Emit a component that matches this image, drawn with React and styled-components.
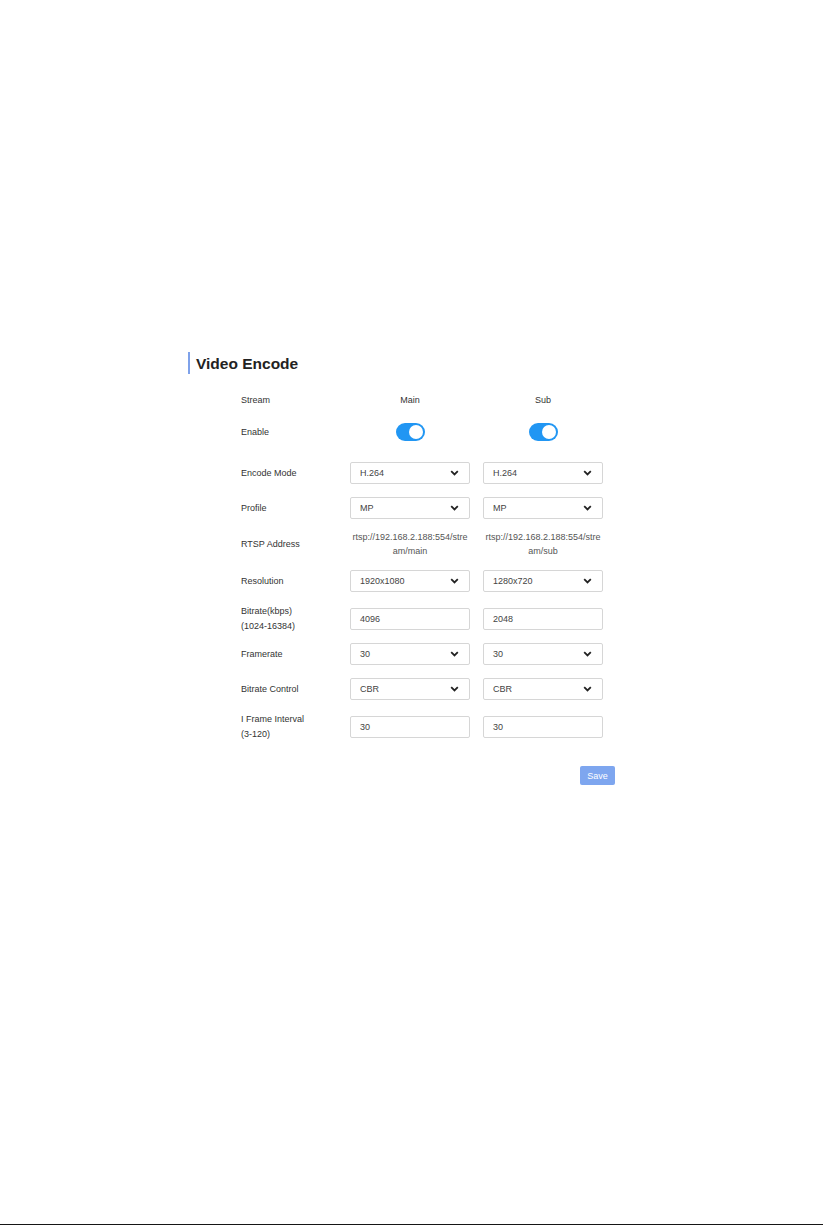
import React from 'react';
import styled, { createGlobalStyle } from 'styled-components';

/* Page wide defaults */
const GlobalStyle = createGlobalStyle`
  html, body {
    margin: 0;
    padding: 0;
    background: #fff;
  }
  body {
    font-family: "Liberation Sans", Arial, sans-serif;
    color: #333;
  }
`;

const Page = styled.div`
  min-height: 100vh;
  display: flex;
  flex-direction: column;
`;

const Section = styled.section`
  padding: 352px 0 0 188px;
`;

const Title = styled.h2`
  margin: 0;
  height: 22px;
  display: flex;
  align-items: center;
  padding: 2px 0 0 6px;
  box-sizing: border-box;
  border-left: 2px solid #7fa2ea;
  font-size: 15.5px;
  font-weight: bold;
  color: #222;
`;

const Form = styled.div`
  width: 374px;
  margin: 15px 0 0 53px;
  display: flex;
  flex-direction: column;
`;

const Row = styled.div`
  display: grid;
  grid-template-columns: 96px 120px 120px;
  column-gap: 13px;
  align-items: center;
  min-height: ${p => p.$h || 22}px;
  margin-top: ${p => p.$top || 0}px;
`;

const Label = styled.div`
  font-size: 9px;
  line-height: 15px;
  color: #333;
`;

const Head = styled.div`
  font-size: 9px;
  color: #333;
  text-align: center;
`;

const Address = styled.div`
  font-size: 9px;
  line-height: 14px;
  color: #555;
  text-align: center;
  word-break: break-all;
  padding: 0 1px;
`;

const SwitchCell = styled.div`
  display: flex;
  justify-content: center;
`;

const Switch = styled.div`
  width: 29px;
  height: 18px;
  border-radius: 9px;
  background: #2196f3;
  display: flex;
  align-items: center;
  justify-content: flex-end;
  padding: 0 2px;
  box-sizing: border-box;
`;

const Knob = styled.span`
  width: 14px;
  height: 14px;
  border-radius: 50%;
  background: #fff;
`;

const Box = styled.div`
  height: 22px;
  box-sizing: border-box;
  border: 1px solid #d6d6d6;
  border-radius: 2px;
  display: flex;
  align-items: center;
  justify-content: space-between;
  padding: 0 10px 0 9px;
  font-size: 9px;
  color: #444;
  background: #fff;
`;

const Actions = styled.div`
  display: flex;
  justify-content: flex-end;
  margin-top: 24px;
  width: 374px;
`;

const Button = styled.button`
  width: 35px;
  height: 19px;
  border: none;
  border-radius: 2px;
  background: #7ea6ef;
  color: #fff;
  font-family: inherit;
  font-size: 9px;
  padding: 0;
`;

const BottomLine = styled.div`
  margin-top: auto;
  height: 1px;
  background: #161616;
`;

const Chevron = () => (
  <svg width="9" height="6" viewBox="0 0 9 6">
    <path d="M1.2 1.2 4.5 4.4 7.8 1.2" fill="none" stroke="#222" strokeWidth="1.8" />
  </svg>
);

const Select = ({ value }) => (
  <Box>
    <span>{value}</span>
    <Chevron />
  </Box>
);

const Input = ({ value }) => (
  <Box>
    <span>{value}</span>
  </Box>
);

const Toggle = () => (
  <SwitchCell>
    <Switch><Knob /></Switch>
  </SwitchCell>
);

export default function App() {
  return (
    <Page>
      <GlobalStyle />
      <Section>
        <Title>Video Encode</Title>
        <Form>
          <Row>
            <Label>Stream</Label>
            <Head>Main</Head>
            <Head>Sub</Head>
          </Row>
          <Row $top={10}>
            <Label>Enable</Label>
            <Toggle />
            <Toggle />
          </Row>
          <Row $top={19}>
            <Label>Encode Mode</Label>
            <Select value="H.264" />
            <Select value="H.264" />
          </Row>
          <Row $top={13}>
            <Label>Profile</Label>
            <Select value="MP" />
            <Select value="MP" />
          </Row>
          <Row $top={11} $h={28}>
            <Label>RTSP Address</Label>
            <Address>rtsp://192.168.2.188:554/stream/main</Address>
            <Address>rtsp://192.168.2.188:554/stream/sub</Address>
          </Row>
          <Row $top={12}>
            <Label>Resolution</Label>
            <Select value="1920x1080" />
            <Select value="1280x720" />
          </Row>
          <Row $top={12} $h={30}>
            <Label>Bitrate(kbps)<br />(1024-16384)</Label>
            <Input value="4096" />
            <Input value="2048" />
          </Row>
          <Row $top={9}>
            <Label>Framerate</Label>
            <Select value="30" />
            <Select value="30" />
          </Row>
          <Row $top={13}>
            <Label>Bitrate Control</Label>
            <Select value="CBR" />
            <Select value="CBR" />
          </Row>
          <Row $top={12} $h={30}>
            <Label>I Frame Interval<br />(3-120)</Label>
            <Input value="30" />
            <Input value="30" />
          </Row>
          <Actions>
            <Button>Save</Button>
          </Actions>
        </Form>
      </Section>
      <BottomLine />
    </Page>
  );
}
